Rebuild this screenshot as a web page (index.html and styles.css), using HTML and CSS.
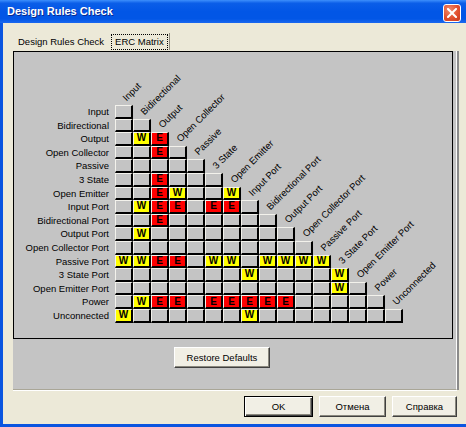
FILE: index.html
```html
<!DOCTYPE html>
<html>
<head>
<meta charset="utf-8">
<link rel="stylesheet" href="styles.css">
</head>
<body>
<div class="window">
  <div class="titlebar">
    <span class="title">Design Rules Check</span>
    <span class="close"><svg width="10" height="10" viewBox="0 0 10 10"><path d="M1 1 L9 9 M9 1 L1 9" stroke="#fff" stroke-width="2" stroke-linecap="square"/></svg></span>
  </div>
  <div class="client">
    <div class="tabs">
      <div class="tab">Design Rules Check</div>
      <div class="tab active"><span class="focus">ERC Matrix</span></div>
    </div>
    <div class="page">
      <div class="mbox">
        <div class="row"><span class="label">Input</span><span class="cell"><span class="col">Input</span></span></div>
        <div class="row"><span class="label">Bidirectional</span><span class="cell"></span><span class="cell"><span class="col">Bidirectional</span></span></div>
        <div class="row"><span class="label">Output</span><span class="cell"></span><span class="cell w">W</span><span class="cell e">E<span class="col">Output</span></span></div>
        <div class="row"><span class="label">Open Collector</span><span class="cell"></span><span class="cell"></span><span class="cell e">E</span><span class="cell"><span class="col">Open Collector</span></span></div>
        <div class="row"><span class="label">Passive</span><span class="cell"></span><span class="cell"></span><span class="cell"></span><span class="cell"></span><span class="cell"><span class="col">Passive</span></span></div>
        <div class="row"><span class="label">3 State</span><span class="cell"></span><span class="cell"></span><span class="cell e">E</span><span class="cell"></span><span class="cell"></span><span class="cell"><span class="col">3 State</span></span></div>
        <div class="row"><span class="label">Open Emitter</span><span class="cell"></span><span class="cell"></span><span class="cell e">E</span><span class="cell w">W</span><span class="cell"></span><span class="cell"></span><span class="cell w">W<span class="col">Open Emitter</span></span></div>
        <div class="row"><span class="label">Input Port</span><span class="cell"></span><span class="cell w">W</span><span class="cell e">E</span><span class="cell e">E</span><span class="cell"></span><span class="cell e">E</span><span class="cell e">E</span><span class="cell"><span class="col">Input Port</span></span></div>
        <div class="row"><span class="label">Bidirectional Port</span><span class="cell"></span><span class="cell"></span><span class="cell e">E</span><span class="cell"></span><span class="cell"></span><span class="cell"></span><span class="cell"></span><span class="cell"></span><span class="cell"><span class="col">Bidirectional Port</span></span></div>
        <div class="row"><span class="label">Output Port</span><span class="cell"></span><span class="cell w">W</span><span class="cell"></span><span class="cell"></span><span class="cell"></span><span class="cell"></span><span class="cell"></span><span class="cell"></span><span class="cell"></span><span class="cell"><span class="col">Output Port</span></span></div>
        <div class="row"><span class="label">Open Collector Port</span><span class="cell"></span><span class="cell"></span><span class="cell"></span><span class="cell"></span><span class="cell"></span><span class="cell"></span><span class="cell"></span><span class="cell"></span><span class="cell"></span><span class="cell"></span><span class="cell"><span class="col">Open Collector Port</span></span></div>
        <div class="row"><span class="label">Passive Port</span><span class="cell w">W</span><span class="cell w">W</span><span class="cell e">E</span><span class="cell e">E</span><span class="cell"></span><span class="cell w">W</span><span class="cell w">W</span><span class="cell"></span><span class="cell w">W</span><span class="cell w">W</span><span class="cell w">W</span><span class="cell w">W<span class="col">Passive Port</span></span></div>
        <div class="row"><span class="label">3 State Port</span><span class="cell"></span><span class="cell"></span><span class="cell"></span><span class="cell"></span><span class="cell"></span><span class="cell"></span><span class="cell"></span><span class="cell w">W</span><span class="cell"></span><span class="cell"></span><span class="cell"></span><span class="cell"></span><span class="cell w">W<span class="col">3 State Port</span></span></div>
        <div class="row"><span class="label">Open Emitter Port</span><span class="cell"></span><span class="cell"></span><span class="cell"></span><span class="cell"></span><span class="cell"></span><span class="cell"></span><span class="cell"></span><span class="cell"></span><span class="cell"></span><span class="cell"></span><span class="cell"></span><span class="cell"></span><span class="cell w">W</span><span class="cell"><span class="col">Open Emitter Port</span></span></div>
        <div class="row"><span class="label">Power</span><span class="cell"></span><span class="cell w">W</span><span class="cell e">E</span><span class="cell e">E</span><span class="cell"></span><span class="cell e">E</span><span class="cell e">E</span><span class="cell e">E</span><span class="cell e">E</span><span class="cell e">E</span><span class="cell"></span><span class="cell"></span><span class="cell"></span><span class="cell"></span><span class="cell"><span class="col">Power</span></span></div>
        <div class="row"><span class="label">Unconnected</span><span class="cell w">W</span><span class="cell"></span><span class="cell"></span><span class="cell"></span><span class="cell"></span><span class="cell"></span><span class="cell"></span><span class="cell w">W</span><span class="cell"></span><span class="cell"></span><span class="cell"></span><span class="cell"></span><span class="cell"></span><span class="cell"></span><span class="cell"></span><span class="cell"><span class="col">Unconnected</span></span></div>
      </div>
      <button class="btn restore">Restore Defaults</button>
    </div>
    <div class="footer">
      <button class="btn ok">OK</button>
      <button class="btn cancel">Отмена</button>
      <button class="btn help">Справка</button>
    </div>
  </div>
</div>
</body>
</html>
```
FILE: styles.css
```css
* { box-sizing: border-box; }
body {
  margin: 0;
  font-family: "Liberation Sans", Arial, sans-serif;
  font-size: 9.5px;
  color: #000;
}
.window {
  width: 466px;
  height: 427px;
  display: flex;
  flex-direction: column;
  background: #0a55e0;
  overflow: hidden;
}
.titlebar {
  height: 23px;
  flex: none;
  display: flex;
  align-items: flex-start;
  justify-content: space-between;
  padding: 0 5px 0 7px;
  background: linear-gradient(#3d8ffc 0%, #0b5ee8 14%, #0256e6 50%, #0256e6 82%, #1a68f0 100%);
  color: #fff;
}
.title {
  margin-top: 5px;
  font-weight: bold;
  font-size: 11px;
  line-height: 13px;
  text-shadow: 1px 1px 0 #0b2a8e;
}
.close {
  margin-top: 4px;
  width: 18px;
  height: 18px;
  border: 1px solid #fff;
  border-radius: 3px;
  background: radial-gradient(circle at 35% 30%, #f08a6c 0%, #e2502f 55%, #c8381c 100%);
  display: flex;
  align-items: center;
  justify-content: center;
}
.client {
  flex: 1;
  margin: 0 0 3px 3px;
  background: #ece9d8;
  display: flex;
  flex-direction: column;
}
.tabs {
  display: flex;
  align-items: flex-end;
  height: 28px;
  margin-left: 10px;
  flex: none;
}
.tab {
  height: 20px;
  padding: 0 5px;
  display: flex;
  align-items: center;
  white-space: nowrap;
}
.tab.active {
  height: 17px;
  margin-bottom: 1px;
  padding: 0 1px 0 2px;
  border-right: 1px solid #8f8c80;
}
.focus {
  height: 16px;
  padding: 0 3px;
  border: 1px dotted #000;
  display: flex;
  align-items: center;
}
.page {
  width: 444px;
  margin-left: 10px;
  padding-bottom: 21px;
  background: #c4c4c4;
  border-right: 1px solid #fbfbfb;
  border-bottom: 1px solid #a9a697;
  box-shadow: 2px 0 0 #8b8b8b, 0 1px 0 #fff;
  flex: none;
}
.mbox {
  width: 440px;
  height: 288px;
  border: 1px solid #000;
  padding-top: 53px;
}
.row {
  display: flex;
  height: 13.6px;
}
.label {
  width: 101px;
  padding-right: 6px;
  text-align: right;
  line-height: 13px;
  white-space: nowrap;
}
.cell {
  width: 18px;
  height: 13.6px;
  flex: none;
  position: relative;
  border-top: 1px solid #f3f2ec;
  border-left: 1px solid #f3f2ec;
  border-right: 2px solid #000;
  border-bottom: 2px solid #000;
  display: flex;
  align-items: center;
  justify-content: center;
  font-weight: bold;
  font-size: 10px;
  line-height: 10px;
}
.cell.w { background: #ffff00; }
.cell.e { background: #ff0000; }
.col {
  position: absolute;
  left: 12px;
  bottom: calc(100% + 3px);
  transform-origin: 0 100%;
  transform: rotate(-45deg);
  font-weight: normal;
  font-size: 9.5px;
  line-height: 10px;
  white-space: nowrap;
}
.btn {
  font-family: "Liberation Sans", Arial, sans-serif;
  font-size: 9.5px;
  color: #000;
  height: 21px;
  padding: 0;
  background: #f1efe5;
  border: 1px solid;
  border-color: #fff #404040 #404040 #fff;
  box-shadow: inset -1px -1px 0 #8a887e;
}
.restore {
  display: block;
  width: 96px;
  margin: 8px 0 0 161px;
}
.footer {
  display: flex;
  justify-content: flex-end;
  padding: 6px 9px 0 0;
}
.ok {
  width: 69px;
  margin-right: 6px;
  border: 1px solid #000;
  box-shadow: inset 1px 1px 0 #fff, inset -1px -1px 0 #404040, inset -2px -2px 0 #8a887e;
}
.cancel {
  width: 67px;
  margin-right: 6px;
}
.help {
  width: 65px;
}
```
